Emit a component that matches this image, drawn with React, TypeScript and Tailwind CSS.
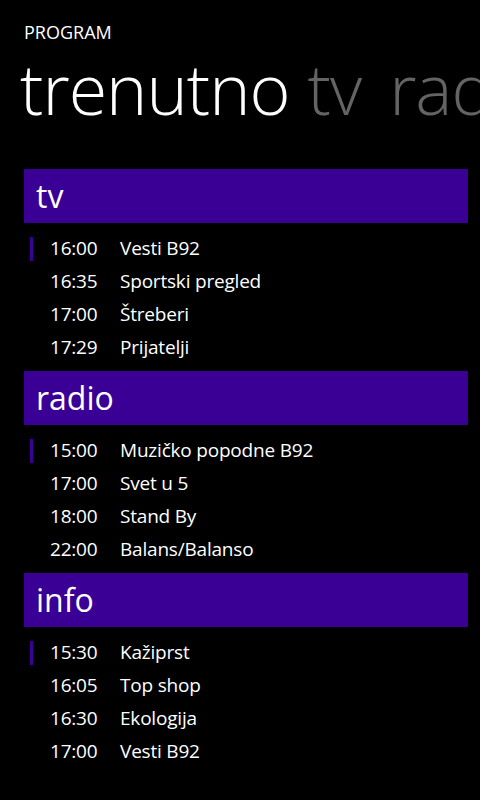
import React from 'react';

type Item = { time: string; title: string };
type Section = { name: string; items: Item[] };

const sections: Section[] = [
  {
    name: 'tv',
    items: [
      { time: '16:00', title: 'Vesti B92' },
      { time: '16:35', title: 'Sportski pregled' },
      { time: '17:00', title: 'Štreberi' },
      { time: '17:29', title: 'Prijatelji' },
    ],
  },
  {
    name: 'radio',
    items: [
      { time: '15:00', title: 'Muzičko popodne B92' },
      { time: '17:00', title: 'Svet u 5' },
      { time: '18:00', title: 'Stand By' },
      { time: '22:00', title: 'Balans/Balanso' },
    ],
  },
  {
    name: 'info',
    items: [
      { time: '15:30', title: 'Kažiprst' },
      { time: '16:05', title: 'Top shop' },
      { time: '16:30', title: 'Ekologija' },
      { time: '17:00', title: 'Vesti B92' },
    ],
  },
];

const ScheduleRow: React.FC<{ item: Item; current: boolean }> = ({ item, current }) => (
  <div className="flex items-center h-[33px] text-[19px] leading-[33px] tracking-[-0.2px] text-white">
    <span className={`ml-[6px] w-[3px] h-6 ${current ? 'bg-[#3a0096]' : ''}`}></span>
    <span className="ml-[17px] w-[70px]">{item.time}</span>
    <span>{item.title}</span>
  </div>
);

const ScheduleSection: React.FC<{ section: Section }> = ({ section }) => (
  <div className="ml-6 mr-3">
    <div className="h-[54px] bg-[#3a0096] flex items-center pl-3 text-[32px] leading-[32px] text-white">
      {section.name}
    </div>
    <div className="pt-[9px] pb-[7px]">
      {section.items.map((item, index) => (
        <ScheduleRow key={index} item={item} current={index === 0} />
      ))}
    </div>
  </div>
);

export default function App() {
  return (
    <div
      className="w-[480px] h-[800px] bg-black overflow-hidden"
      style={{ fontFamily: '"Open Sans", "Noto Sans", sans-serif' }}
    >
      <div className="pt-[20px] pl-6 text-[18px] leading-[24px] text-white">PROGRAM</div>
      <div className="mt-[9px] pl-[20px] h-[70px] whitespace-nowrap text-[70px] leading-[70px] font-light tracking-[-1px]">
        <span className="text-white">trenutno</span>
        <span className="text-[#646464] ml-[18px]">tv</span>
        <span className="text-[#646464] ml-[28px]">radio</span>
      </div>
      <div className="mt-[46px]">
        {sections.map((section) => (
          <ScheduleSection key={section.name} section={section} />
        ))}
      </div>
    </div>
  );
}
